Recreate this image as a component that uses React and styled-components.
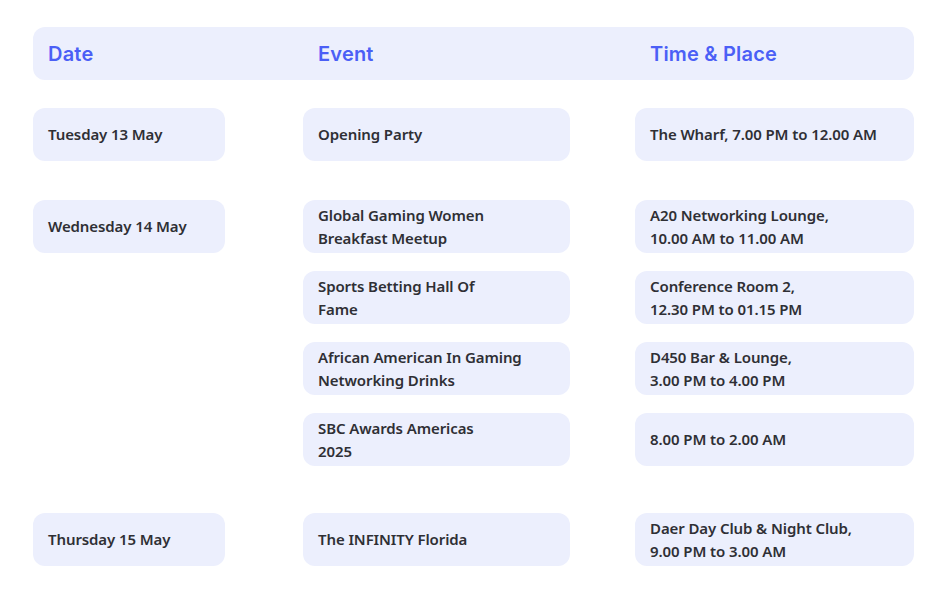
import { Fragment } from 'react';
import styled, { createGlobalStyle } from 'styled-components';

const GlobalStyle = createGlobalStyle`
    body {
        margin: 0;
        background: #ffffff;
        font-family: "Noto Sans", "Open Sans", sans-serif;
    }
`;

const schedule = [
    {
        day: 'Tuesday 13 May',
        gap: 28,
        events: [
            { name: 'Opening Party', place: 'The Wharf, 7.00 PM to 12.00 AM' },
        ],
    },
    {
        day: 'Wednesday 14 May',
        gap: 39,
        events: [
            { name: ['Global Gaming Women', 'Breakfast Meetup'], place: ['A20 Networking Lounge,', '10.00 AM to 11.00 AM'] },
            { name: ['Sports Betting Hall Of', 'Fame'], place: ['Conference Room 2,', '12.30 PM to 01.15 PM'] },
            { name: ['African American In Gaming', 'Networking Drinks'], place: ['D450 Bar & Lounge,', '3.00 PM to 4.00 PM'] },
            { name: ['SBC Awards Americas', '2025'], place: '8.00 PM to 2.00 AM' },
        ],
    },
    {
        day: 'Thursday 15 May',
        gap: 47,
        events: [
            { name: 'The INFINITY Florida', place: ['Daer Day Club & Night Club,', '9.00 PM to 3.00 AM'] },
        ],
    },
];

const Lines = ({ text }) =>
    Array.isArray(text)
        ? text.map((t, i) => <span key={i}>{t}</span>)
        : <span>{text}</span>;

const Schedule = () => {
    return (
        <ScheduleStyled>
            <GlobalStyle />
            <Header>
                <HeaderLabel $col={1}>Date</HeaderLabel>
                <HeaderLabel $col={3}>Event</HeaderLabel>
                <HeaderLabel $col={5}>Time &amp; Place</HeaderLabel>
            </Header>

            { schedule.map((group) => (
                <DayGroup key={group.day} $gap={group.gap}>
                    <Cell $col={1} $row={1}><Lines text={group.day} /></Cell>
                    { group.events.map((ev, i) => (
                        <Fragment key={i}>
                            <Cell $col={3} $row={i + 1}><Lines text={ev.name} /></Cell>
                            <Cell $col={5} $row={i + 1}><Lines text={ev.place} /></Cell>
                        </Fragment>
                    )) }
                </DayGroup>
            )) }
        </ScheduleStyled>
    );
}

export default Schedule;

const columns = '192px 78px 267px 65px 279px';

const ScheduleStyled = styled.div`
    width: 881px;
    padding: 27px 0 20px 33px;
`;

const Header = styled.div`
    display: grid;
    grid-template-columns: ${columns};
    height: 53px;
    align-items: center;
    background: #eceffd;
    border-radius: 12px;
`;

const HeaderLabel = styled.div`
    grid-column: ${p => p.$col};
    padding-left: 15px;
    font-family: "Inter", "Noto Sans", sans-serif;
    font-size: 20px;
    font-weight: 600;
    letter-spacing: 0.2px;
    color: #4b5ff6;
`;

const DayGroup = styled.div`
    display: grid;
    grid-template-columns: ${columns};
    grid-auto-rows: 53px;
    row-gap: 18px;
    margin-top: ${p => p.$gap}px;
`;

const Cell = styled.div`
    grid-column: ${p => p.$col};
    grid-row: ${p => p.$row};
    display: flex;
    flex-direction: column;
    justify-content: center;
    padding: 0 15px;
    background: #eceffd;
    border-radius: 12px;
    font-size: 15px;
    font-weight: 600;
    line-height: 23px;
    color: #2f2f35;
    letter-spacing: -0.1px;
`;
